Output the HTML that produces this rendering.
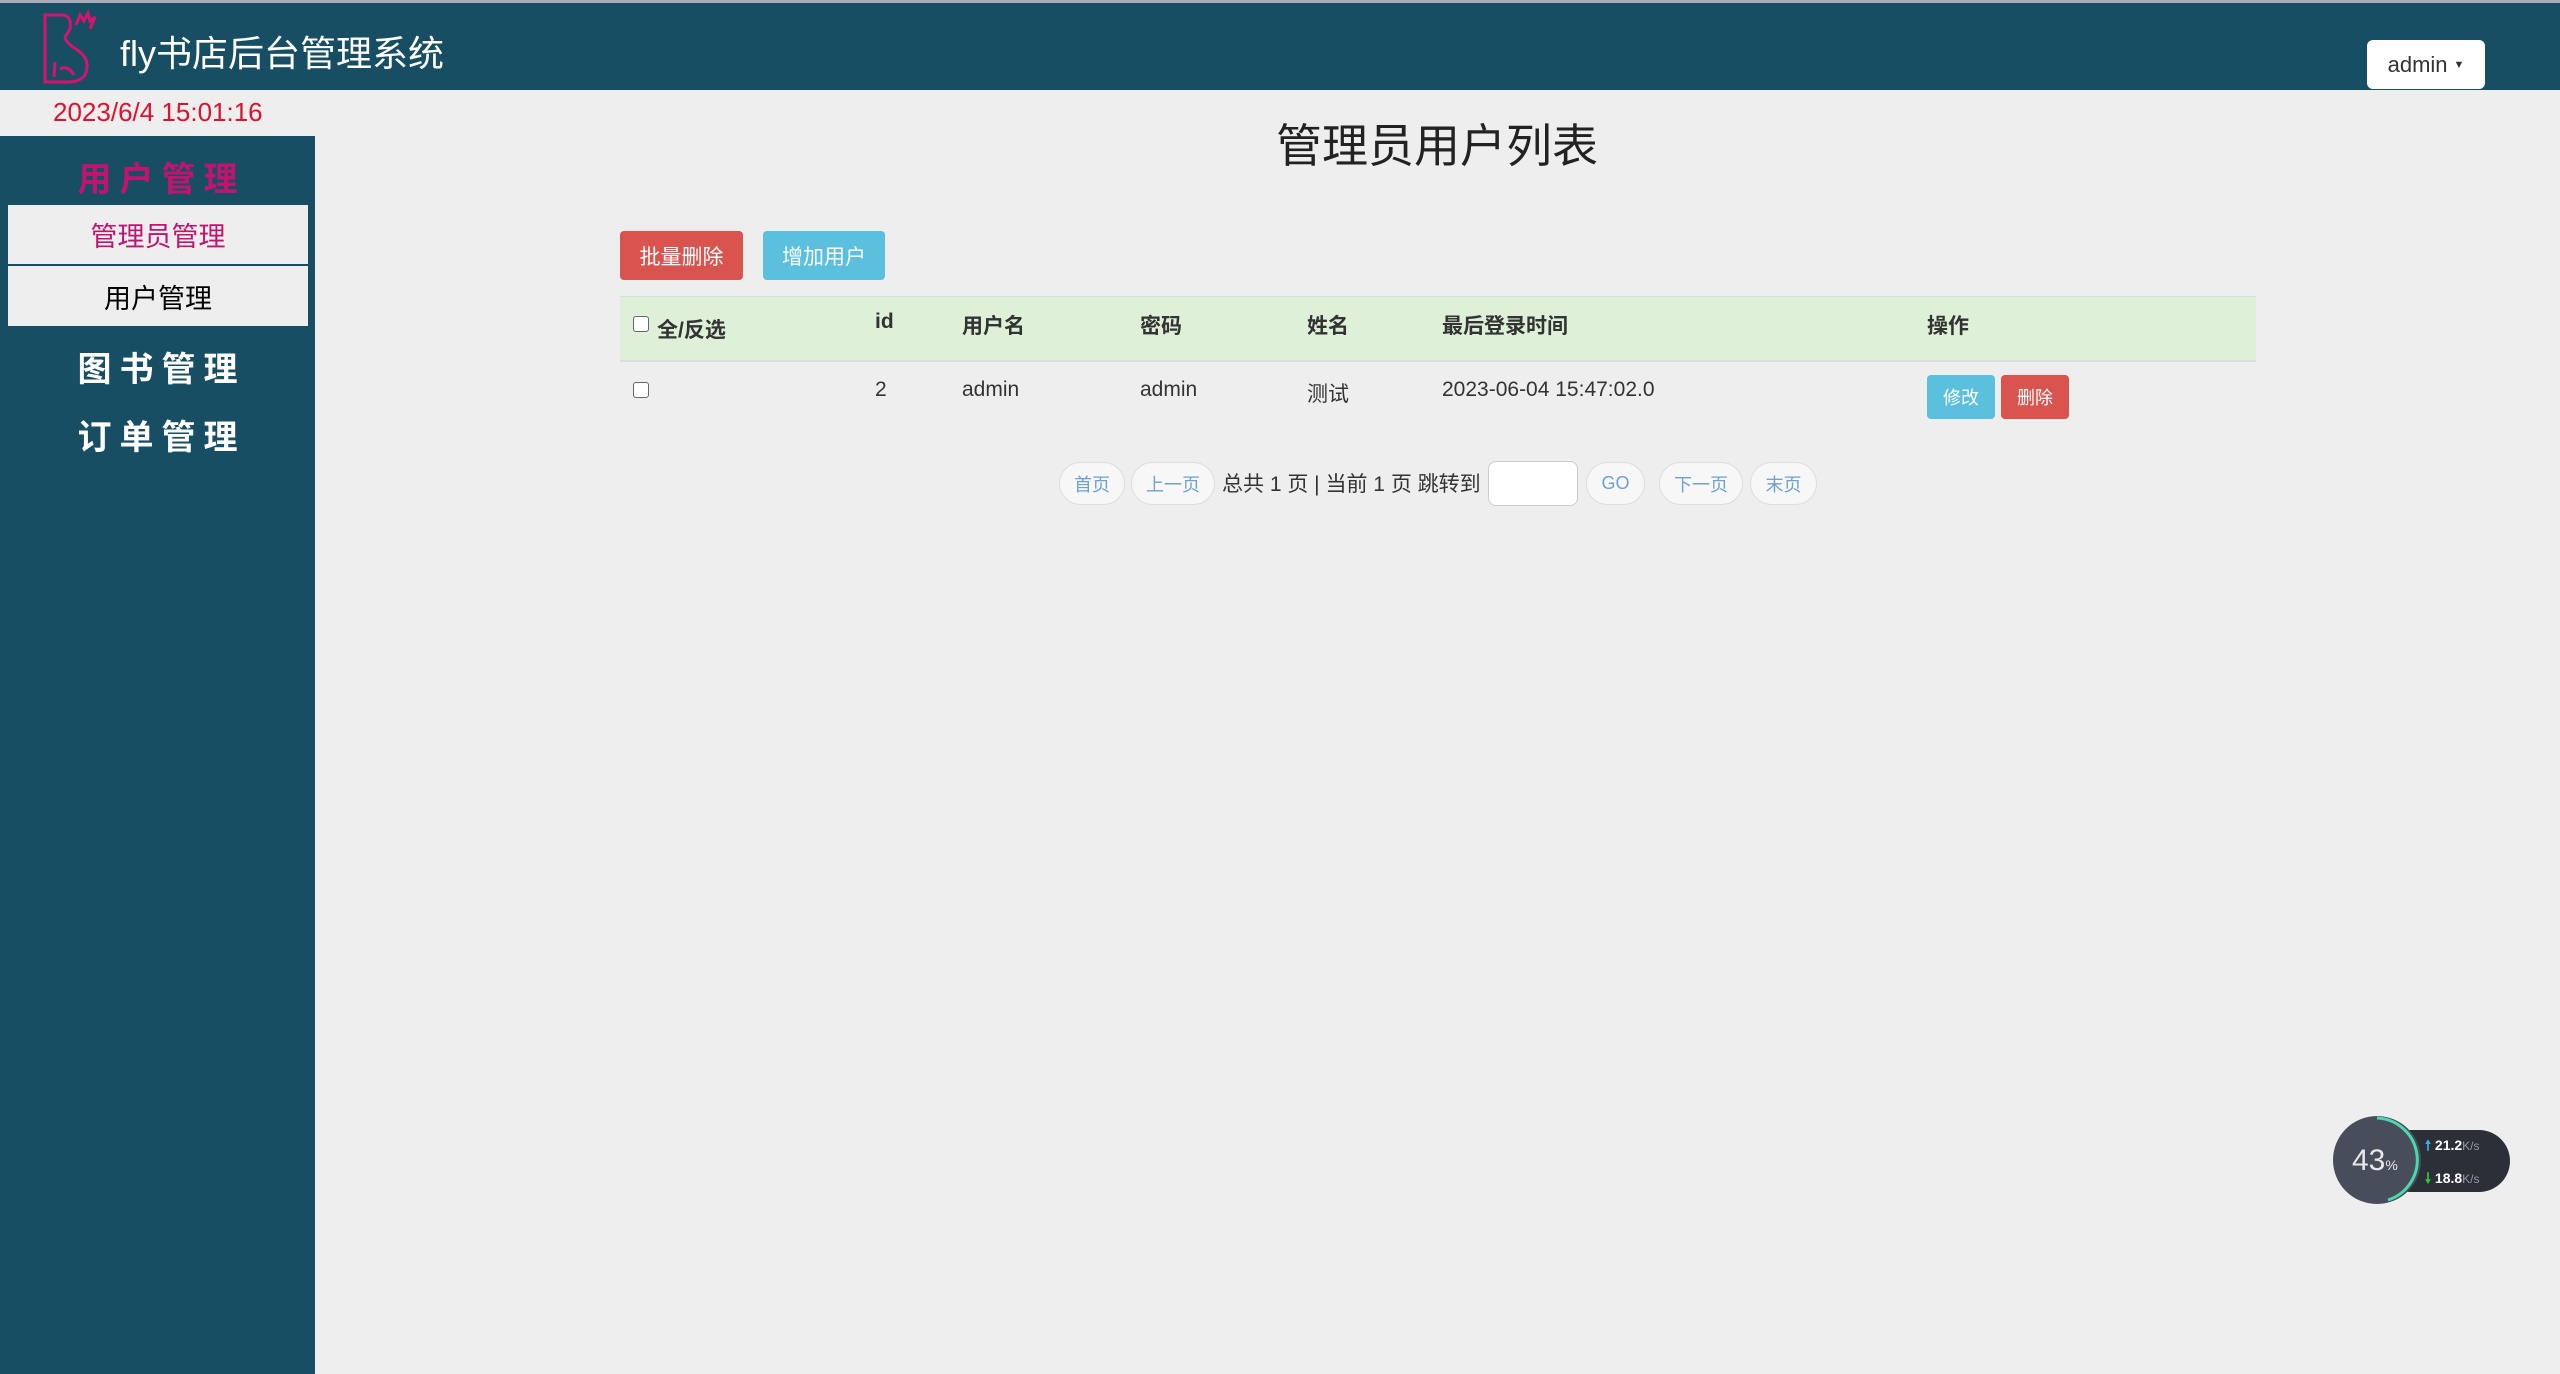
<!DOCTYPE html>
<html><head><meta charset="utf-8"><style>
*{margin:0;padding:0;box-sizing:border-box}
body{width:2560px;height:1374px;background:#eeeeee;font-family:"Liberation Sans","Noto Sans CJK SC",sans-serif;position:relative;overflow:hidden}
.a{position:absolute}
.hdr{left:0;top:0;width:2560px;height:90px;background:#174e63;border-top:3px solid #aab}
.side{left:0;top:136px;width:315px;height:1238px;background:#174e63}
.btn{position:absolute;border-radius:4px;color:#fff;font-size:21px;display:flex;align-items:center;justify-content:center}
.pg{position:absolute;top:462px;height:43px;border:1px solid #ddd;background:#f7f7f7;border-radius:22px;color:#6fa2d0;font-size:18px;display:flex;align-items:center;justify-content:center}
.th{position:absolute;top:310px;font-size:21px;font-weight:bold;color:#333}
.td{position:absolute;top:378px;font-size:21px;color:#333}
.cb{position:absolute;width:16px;height:16px;border:1.5px solid #666;border-radius:3px;background:#fff}
.sh{position:absolute;left:0;width:315px;text-align:center;font-size:34px;font-weight:bold;letter-spacing:8px;padding-left:8px}
</style></head><body>
<div class="a hdr"></div>
<svg class="a" style="left:40px;top:7px" width="60" height="78" viewBox="0 0 60 78">
<g fill="none" stroke="#d4146e" stroke-width="3">
<path d="M5 8 L22 8 Q32 8 30 22 L25 30 Q26 36 36 42 Q52 52 45 68 Q40 75 28 75 L5 75 Z"/>
<path d="M36 18 L40 8 L44 14 L48 6 L50 14 L55 10 L50 22"/>
<path d="M15 55 L14 70 M20 62 Q28 58 34 68"/>
</g></svg>
<div class="a" style="left:120px;top:25px;font-size:36px;color:#fff">fly书店后台管理系统</div>
<div class="btn" style="left:2367px;top:40px;width:118px;height:49px;background:#fff;color:#333;font-size:22px;border-radius:6px">admin <span style="font-size:11px;margin-left:6px">▼</span></div>
<div class="a" style="left:53px;top:97px;font-size:26px;color:#e0102f">2023/6/4 15:01:16</div>
<div class="a side"></div>
<div class="sh" style="top:152px;color:#c0146e">用户管理</div>
<div class="a" style="left:8px;top:205px;width:300px;height:60px;background:#eee;color:#c0146e;font-size:27px;display:flex;align-items:center;justify-content:center;border-bottom:1px solid #174e63">管理员管理</div>
<div class="a" style="left:8px;top:266px;width:300px;height:60px;background:#eee;color:#000;font-size:27px;display:flex;align-items:center;justify-content:center">用户管理</div>
<div class="sh" style="top:342px;color:#fff">图书管理</div>
<div class="sh" style="top:410px;color:#fff">订单管理</div>
<div class="a" style="left:1237px;top:110px;width:400px;text-align:center;font-size:46px;color:#222">管理员用户列表</div>
<div class="btn" style="left:620px;top:231px;width:123px;height:49px;background:#d9534f">批量删除</div>
<div class="btn" style="left:763px;top:231px;width:122px;height:49px;background:#5bc0de">增加用户</div>
<div class="a" style="left:620px;top:296px;width:1636px;height:66px;background:#dff0d8;border-top:1px solid #ddd;border-bottom:2px solid #ddd"></div>
<div class="cb" style="left:633px;top:316px"></div>
<div class="th" style="left:657px;top:314px">全/反选</div>
<div class="th" style="left:875px">id</div>
<div class="th" style="left:962px">用户名</div>
<div class="th" style="left:1140px">密码</div>
<div class="th" style="left:1307px">姓名</div>
<div class="th" style="left:1442px">最后登录时间</div>
<div class="th" style="left:1927px">操作</div>
<div class="cb" style="left:633px;top:382px"></div>
<div class="td" style="left:875px">2</div>
<div class="td" style="left:962px">admin</div>
<div class="td" style="left:1140px">admin</div>
<div class="td" style="left:1307px">测试</div>
<div class="td" style="left:1442px">2023-06-04 15:47:02.0</div>
<div class="btn" style="left:1927px;top:375px;width:68px;height:44px;background:#5bc0de;font-size:18px">修改</div>
<div class="btn" style="left:2001px;top:375px;width:68px;height:44px;background:#d9534f;font-size:18px">删除</div>
<div class="pg" style="left:1059px;width:66px">首页</div>
<div class="pg" style="left:1131px;width:84px">上一页</div>
<div class="a" style="left:1222px;top:468px;font-size:21px;color:#333">总共 1 页 | 当前 1 页 跳转到</div>
<div class="a" style="left:1488px;top:461px;width:90px;height:45px;background:#fff;border:1px solid #ccc;border-radius:8px"></div>
<div class="pg" style="left:1586px;width:59px">GO</div>
<div class="pg" style="left:1659px;width:84px">下一页</div>
<div class="pg" style="left:1750px;width:67px">末页</div>
<div class="a" style="left:2380px;top:1130px;width:130px;height:62px;background:#2a2f38;border-radius:31px"></div>
<div class="a" style="left:2425px;top:1135px;font-size:14px;font-weight:bold;color:#fff"><span style="color:#3ab0f0">🠕</span> 21.2<span style="color:#99a;font-weight:normal;font-size:12px">K/s</span></div>
<div class="a" style="left:2425px;top:1168px;font-size:14px;font-weight:bold;color:#fff"><span style="color:#3c3">🠗</span> 18.8<span style="color:#99a;font-weight:normal;font-size:12px">K/s</span></div>
<svg class="a" style="left:2330px;top:1113px" width="94" height="94"><circle cx="47" cy="47" r="44" fill="#474d5a"/><path d="M47 5 A42 42 0 0 1 58 87" fill="none" stroke="#4cd6b0" stroke-width="3"/><text x="22" y="57" font-size="30" fill="#e8e8e8" font-family="Liberation Sans">43<tspan font-size="14">%</tspan></text></svg>
</body></html>
